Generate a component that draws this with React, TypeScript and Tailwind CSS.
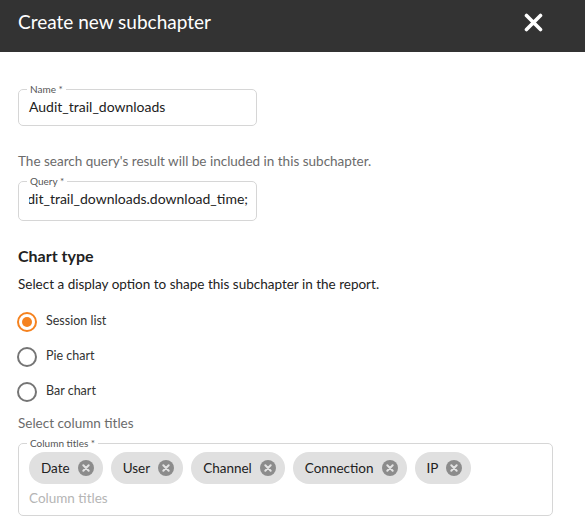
import React from "react";

const font = { fontFamily: "Lato, 'Noto Sans', sans-serif" };

function Chip({ label }: { label: string }) {
  return (
    <div className="flex h-[32px] items-center gap-[8px] rounded-full bg-[#e0e0e0] pl-[12px] pr-[9px]">
      <span className="text-[13.5px] text-[#222]">{label}</span>
      <svg width="16" height="16" viewBox="0 0 16 16">
        <circle cx="8" cy="8" r="8" fill="#8c8c8c" />
        <path d="M5.3 5.3 L10.7 10.7 M10.7 5.3 L5.3 10.7" stroke="#e3e3e3" strokeWidth="2" strokeLinecap="round" />
      </svg>
    </div>
  );
}

function Radio({ label, checked }: { label: string; checked?: boolean }) {
  return (
    <div className="flex h-[35px] items-center gap-[9px]">
      {checked ? (
        <div className="ml-[-1px] flex h-[20px] w-[20px] items-center justify-center rounded-full border-2 border-[#f5821f]">
          <div className="h-[10px] w-[10px] rounded-full bg-[#f5821f]" />
        </div>
      ) : (
        <div className="ml-[-1px] h-[20px] w-[20px] rounded-full border-2 border-[#757575]" />
      )}
      <span className="text-[12.5px] text-[#333]">{label}</span>
    </div>
  );
}

export default function App() {
  return (
    <div className="h-[520px] w-[585px] overflow-hidden bg-white" style={font}>
      <div className="flex h-[52px] items-start justify-between bg-[#333333] pl-[18px] pr-[42px]">
        <div className="flex h-[44px] items-center text-[19px] text-white">Create new subchapter</div>
        <div className="flex h-[44px] items-center">
          <svg width="19" height="19" viewBox="0 0 19 19">
            <path d="M2.5 2.5 L16.5 16.5 M16.5 2.5 L2.5 16.5" stroke="white" strokeWidth="3.6" strokeLinecap="round" />
          </svg>
        </div>
      </div>
      <div className="flex flex-col px-[18px]">
        <fieldset className="mt-[31px] w-[239px] min-w-0 rounded-[5px] border border-[#d6d6d6] px-[10px] pb-[8px] pt-[2px]">
          <legend className="ml-[-2px] px-[3px] text-[10px] leading-[12px] text-[#555]">Name *</legend>
          <div className="text-[14px] leading-[20px] text-[#222]">Audit_trail_downloads</div>
        </fieldset>
        <div className="mt-[25px] text-[13.5px] leading-[20px] text-[#6b6b6b]">
          The search query's result will be included in this subchapter.
        </div>
        <fieldset className="mt-[4px] w-[239px] min-w-0 rounded-[5px] border border-[#d6d6d6] pb-[11px] pl-[10px] pr-[8px] pt-[2px]">
          <legend className="ml-[-2px] px-[3px] text-[10px] leading-[12px] text-[#555]">Query *</legend>
          <div className="flex min-w-0 justify-end overflow-hidden whitespace-nowrap text-[14px] leading-[20px] text-[#222]">
            <span className="shrink-0">audit_trail_downloads.download_time;</span>
          </div>
        </fieldset>
        <div className="mt-[23px] text-[16px] font-bold leading-[24px] text-[#222]">Chart type</div>
        <div className="mt-[6px] text-[13.5px] leading-[20px] text-[#222]">
          Select a display option to shape this subchapter in the report.
        </div>
        <div className="mt-[10px] flex flex-col">
          <Radio label="Session list" checked />
          <Radio label="Pie chart" />
          <Radio label="Bar chart" />
        </div>
        <div className="mt-[4px] text-[13.5px] leading-[20px] text-[#6b6b6b]">Select column titles</div>
        <fieldset className="mt-[4px] w-[535px] min-w-0 rounded-[5px] border border-[#d6d6d6] pb-[7px] pl-[10px] pr-[10px] pt-[3px]">
          <legend className="ml-[-2px] px-[3px] text-[10px] leading-[12px] text-[#555]">Column titles *</legend>
          <div className="flex flex-wrap gap-[8px]">
            <Chip label="Date" />
            <Chip label="User" />
            <Chip label="Channel" />
            <Chip label="Connection" />
            <Chip label="IP" />
          </div>
          <div className="mt-[4px] text-[13.5px] leading-[20px] text-[#b5b5b5]">Column titles</div>
        </fieldset>
      </div>
    </div>
  );
}
